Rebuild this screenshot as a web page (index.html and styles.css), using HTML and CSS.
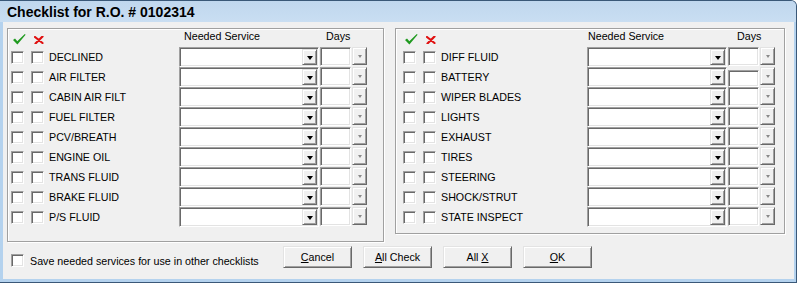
FILE: index.html
```html
<!DOCTYPE html>
<html lang="en">

<head>
  <meta charset="UTF-8">
  <title>Checklist for R.O. # 0102314</title>
  <link rel="stylesheet" href="styles.css">
</head>

<body>
  <div class="window">
    <div class="titlebar">Checklist for R.O. # 0102314</div>
    <div class="client">
      <div class="groups">

        <!-- left column of services -->
        <div class="group group-left">
          <div class="head">
            <span class="head-ok">
              <svg width="13" height="11" viewBox="0 0 13 11"><path d="M0 6 L2 4.5 L4.3 7.2 L11.8 0 L12.6 0.8 L4.4 10.5 Z" fill="#1f9a1f"/></svg>
            </span>
            <span class="head-no">
              <svg width="10" height="8" viewBox="0 0 10 8"><path d="M1 1 L8.5 7 M8.5 0.5 L1.5 7.5" stroke="#e01010" stroke-width="2.2" stroke-linecap="round"/></svg>
            </span>
            <span class="head-service">Needed Service</span>
            <span class="head-days">Days</span>
          </div>
          <div class="row"><span class="box"></span><span class="box"></span><span class="item">DECLINED</span><span class="combo"><span class="drop"><i class="tri"></i></span></span><span class="days"></span><span class="spin"><i class="tri tri-dim"></i></span></div>
          <div class="row"><span class="box"></span><span class="box"></span><span class="item">AIR FILTER</span><span class="combo"><span class="drop"><i class="tri"></i></span></span><span class="days"></span><span class="spin"><i class="tri tri-dim"></i></span></div>
          <div class="row"><span class="box"></span><span class="box"></span><span class="item">CABIN AIR FILT</span><span class="combo"><span class="drop"><i class="tri"></i></span></span><span class="days"></span><span class="spin"><i class="tri tri-dim"></i></span></div>
          <div class="row"><span class="box"></span><span class="box"></span><span class="item">FUEL FILTER</span><span class="combo"><span class="drop"><i class="tri"></i></span></span><span class="days"></span><span class="spin"><i class="tri tri-dim"></i></span></div>
          <div class="row"><span class="box"></span><span class="box"></span><span class="item">PCV/BREATH</span><span class="combo"><span class="drop"><i class="tri"></i></span></span><span class="days"></span><span class="spin"><i class="tri tri-dim"></i></span></div>
          <div class="row"><span class="box"></span><span class="box"></span><span class="item">ENGINE OIL</span><span class="combo"><span class="drop"><i class="tri"></i></span></span><span class="days"></span><span class="spin"><i class="tri tri-dim"></i></span></div>
          <div class="row"><span class="box"></span><span class="box"></span><span class="item">TRANS FLUID</span><span class="combo"><span class="drop"><i class="tri"></i></span></span><span class="days"></span><span class="spin"><i class="tri tri-dim"></i></span></div>
          <div class="row"><span class="box"></span><span class="box"></span><span class="item">BRAKE FLUID</span><span class="combo"><span class="drop"><i class="tri"></i></span></span><span class="days"></span><span class="spin"><i class="tri tri-dim"></i></span></div>
          <div class="row"><span class="box"></span><span class="box"></span><span class="item">P/S FLUID</span><span class="combo"><span class="drop"><i class="tri"></i></span></span><span class="days"></span><span class="spin"><i class="tri tri-dim"></i></span></div>
        </div>

        <!-- right column of services -->
        <div class="group group-right">
          <div class="head">
            <span class="head-ok">
              <svg width="13" height="11" viewBox="0 0 13 11"><path d="M0 6 L2 4.5 L4.3 7.2 L11.8 0 L12.6 0.8 L4.4 10.5 Z" fill="#1f9a1f"/></svg>
            </span>
            <span class="head-no">
              <svg width="10" height="8" viewBox="0 0 10 8"><path d="M1 1 L8.5 7 M8.5 0.5 L1.5 7.5" stroke="#e01010" stroke-width="2.2" stroke-linecap="round"/></svg>
            </span>
            <span class="head-service">Needed Service</span>
            <span class="head-days">Days</span>
          </div>
          <div class="row"><span class="box"></span><span class="box"></span><span class="item">DIFF FLUID</span><span class="combo"><span class="drop"><i class="tri"></i></span></span><span class="days"></span><span class="spin"><i class="tri tri-dim"></i></span></div>
          <div class="row"><span class="box"></span><span class="box"></span><span class="item">BATTERY</span><span class="combo"><span class="drop"><i class="tri"></i></span></span><span class="days days-low"></span><span class="spin"><i class="tri tri-dim"></i></span></div>
          <div class="row"><span class="box"></span><span class="box"></span><span class="item">WIPER BLADES</span><span class="combo"><span class="drop"><i class="tri"></i></span></span><span class="days"></span><span class="spin"><i class="tri tri-dim"></i></span></div>
          <div class="row"><span class="box"></span><span class="box"></span><span class="item">LIGHTS</span><span class="combo"><span class="drop"><i class="tri"></i></span></span><span class="days"></span><span class="spin"><i class="tri tri-dim"></i></span></div>
          <div class="row"><span class="box"></span><span class="box"></span><span class="item">EXHAUST</span><span class="combo"><span class="drop"><i class="tri"></i></span></span><span class="days"></span><span class="spin"><i class="tri tri-dim"></i></span></div>
          <div class="row"><span class="box"></span><span class="box"></span><span class="item">TIRES</span><span class="combo"><span class="drop"><i class="tri"></i></span></span><span class="days"></span><span class="spin"><i class="tri tri-dim"></i></span></div>
          <div class="row"><span class="box"></span><span class="box"></span><span class="item">STEERING</span><span class="combo"><span class="drop"><i class="tri"></i></span></span><span class="days"></span><span class="spin"><i class="tri tri-dim"></i></span></div>
          <div class="row"><span class="box"></span><span class="box"></span><span class="item">SHOCK/STRUT</span><span class="combo"><span class="drop"><i class="tri"></i></span></span><span class="days"></span><span class="spin"><i class="tri tri-dim"></i></span></div>
          <div class="row"><span class="box"></span><span class="box"></span><span class="item">STATE INSPECT</span><span class="combo"><span class="drop"><i class="tri"></i></span></span><span class="days"></span><span class="spin"><i class="tri tri-dim"></i></span></div>
        </div>

      </div>

      <div class="footer">
        <div class="save">
          <span class="box"></span>
          <span>Save needed services for use in other checklists</span>
        </div>
        <div class="buttons">
          <button class="btn"><u>C</u>ancel</button>
          <button class="btn"><u>A</u>ll Check</button>
          <button class="btn">All <u>X</u></button>
          <button class="btn"><u>O</u>K</button>
        </div>
      </div>
    </div>
  </div>
</body>

</html>
```

FILE: styles.css
```css
* {
  margin: 0;
  padding: 0;
  box-sizing: border-box;
}

:root {
  --face: #f0f0f0;
  --frame: #b4d2ee;
  --shadow: #a0a0a0;
  --dark: #696969;
  --light: #e3e3e3;
}

body {
  width: 797px;
  height: 283px;
  overflow: hidden;
  font-family: "Liberation Sans", Arial, sans-serif;
  font-size: 10.7px;
  color: #000;
  background: #fff;
}

.window {
  display: flex;
  flex-direction: column;
  width: 797px;
  height: 283px;
  background: var(--frame);
  border: 1px solid #3a5878;
  border-left: 0;
  border-top-right-radius: 6px;
}

.titlebar {
  height: 21px;
  padding: 1px 0 0 7px;
  line-height: 20px;
  font-size: 14px;
  font-weight: bold;
  background: linear-gradient(#c0d7ee, #c9def2);
  border-top-right-radius: 5px;
}

.client {
  display: flex;
  flex-direction: column;
  height: 257px;
  margin: 0 2px 3px 3px;
  padding: 6px 0 0 4px;
  background: var(--face);
}

.groups {
  display: flex;
  align-items: flex-start;
  gap: 11px;
}

/** etched group frame */
.group {
  border: 1px solid var(--shadow);
  box-shadow: inset 1px 1px 0 #fff, 1px 1px 0 #fff;
}

.group-left {
  width: 377px;
  height: 214px;
  --pad: 3px;
  --item-width: 130px;
  --service-pad: 4px;
  --days-pad: 5px;
}

.group-right {
  width: 390px;
  height: 206px;
  --pad: 7px;
  --item-width: 146px;
  --service-pad: 0px;
  --days-pad: 8px;
}

.head {
  display: flex;
  align-items: flex-start;
  height: 18px;
  padding-left: var(--pad);

  & svg {
    display: block;
  }
}

.head-ok {
  width: 20px;
  padding: 5px 0 0 2px;
}

.head-no {
  width: 19px;
  padding: 7px 0 0 3px;
}

.head-service {
  width: calc(var(--item-width) + 141px);
  padding: 1px 0 0 calc(var(--item-width) + var(--service-pad));
}

.head-days {
  padding: 1px 0 0 var(--days-pad);
}

.row {
  display: flex;
  align-items: center;
  height: 20px;
  padding-left: var(--pad);
}

/** sunken 3d edge */
.box,
.combo,
.days {
  background: #fff;
  border: 1px solid;
  border-color: var(--shadow) #fff #fff var(--shadow);
  box-shadow: inset 1px 1px 0 var(--dark), inset -1px -1px 0 var(--light);
}

.box {
  flex-shrink: 0;
  width: 13px;
  height: 13px;
  margin-right: 7px;

  & + .box {
    margin-right: 5px;
  }
}

.item {
  width: var(--item-width);
  white-space: nowrap;
}

.row .box {
  margin-top: 1px;
}

.combo {
  display: flex;
  justify-content: flex-end;
  align-items: center;
  width: 140px;
  height: 20px;
  padding: 1px 1px 1px 2px;
}

/** raised 3d edge */
.drop,
.spin,
.btn {
  background: var(--face);
  border: 1px solid;
  border-color: var(--light) var(--dark) var(--dark) var(--light);
  box-shadow: inset 1px 1px 0 #fff, inset -1px -1px 0 var(--shadow);
}

.drop,
.spin {
  display: flex;
  justify-content: center;
  align-items: center;
}

.drop {
  width: 15px;
  height: 16px;
}

.days {
  width: 31px;
  height: 19px;
  margin: 0 0 1px 1px;
}

.days-low {
  height: 17px;
  margin: 3px 0 0 1px;
}

.spin {
  width: 15px;
  height: 18px;
  margin: 0 0 2px 1px;
}

.tri {
  width: 0;
  height: 0;
  border-left: 3.5px solid transparent;
  border-right: 3.5px solid transparent;
  border-top: 4px solid #000;
  margin-top: 1px;
}

.tri-dim {
  border-left-width: 2.5px;
  border-right-width: 2.5px;
  border-top: 3px solid #8a8a8a;
}

.footer {
  display: flex;
  align-items: flex-start;
  margin-top: 4px;
  padding-left: 4px;
}

.save {
  display: flex;
  align-items: center;
  width: 272px;
  padding-top: 8px;

  & .box {
    margin-right: 6px;
  }
}

.buttons {
  display: flex;
  gap: 11px;
}

.btn {
  display: block;
  width: 69px;
  height: 22px;
  text-align: center;
  font-family: inherit;
  font-size: 10.7px;
  color: #000;
}
```
